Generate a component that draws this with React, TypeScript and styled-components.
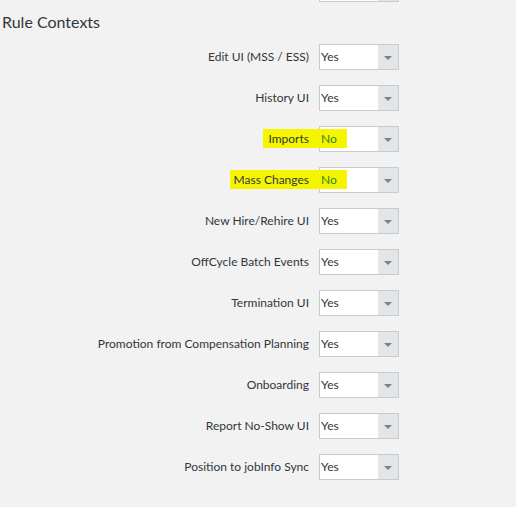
import React from "react";
import styled, { createGlobalStyle } from "styled-components";

const Global = createGlobalStyle`
  html, body { margin: 0; padding: 0; background: #f2f2f2; }
  body { font-family: Lato, "Open Sans", Arial, sans-serif; color: #32363a; }
`;

const Page = styled.div`
  width: 516px;
  height: 507px;
  background: #f2f2f2;
  overflow: hidden;
`;

const CutSelect = styled.div`
  margin-left: 319px;
  width: 78px;
  height: 1px;
  display: grid;
  grid-template-columns: 1fr 20px;
  border: 1px solid #c8cbcd;
  border-top: none;
  div:first-child { background: #fff; }
  div:last-child { background: #e3e6e8; }
`;

const Title = styled.h2`
  margin: 9px 0 0 2px;
  font-size: 16px;
  font-weight: 400;
  line-height: 22px;
  color: #32363a;
`;

const Form = styled.div`
  display: grid;
  grid-template-columns: 309px 80px;
  column-gap: 10px;
  row-gap: 15px;
  margin-top: 11px;
`;

const Label = styled.div`
  position: relative;
  font-size: 12px;
  line-height: 26px;
  height: 26px;
  text-align: right;
  white-space: nowrap;
  color: #32363a;
`;

const Highlight = styled.span<{ $w: number; $l: number }>`
  position: absolute;
  top: 3px;
  left: ${(p) => p.$l}px;
  width: ${(p) => p.$w}px;
  height: 19px;
  background: #f5f500;
  z-index: 0;
`;

const LabelText = styled.span`
  position: relative;
  z-index: 1;
`;

const Select = styled.div`
  position: relative;
  box-sizing: border-box;
  height: 26px;
  display: grid;
  grid-template-columns: 1fr 20px;
  border: 1px solid #c8cbcd;
  background: #fff;
`;

const Value = styled.span<{ $green?: boolean }>`
  position: relative;
  z-index: 1;
  font-size: 12px;
  line-height: 24px;
  padding-left: 1px;
  color: ${(p) => (p.$green ? "#2b8a1e" : "#32363a")};
`;

const ArrowBox = styled.div`
  background: #e3e6e8;
  display: flex;
  align-items: center;
  justify-content: center;
`;

const Arrow = styled.span`
  width: 0;
  height: 0;
  border-left: 4px solid transparent;
  border-right: 4px solid transparent;
  border-top: 4px solid #7c8285;
  margin-top: 1px;
`;

const SelectHighlight = styled.span<{ $w: number }>`
  position: absolute;
  left: -1px;
  top: 2px;
  width: ${(p) => p.$w}px;
  height: 19px;
  background: #f5f500;
  z-index: 0;
`;

type Row = { label: string; value: string; hl?: { l: number; w: number; sw: number } };

const rows: Row[] = [
  { label: "Edit UI (MSS / ESS)", value: "Yes" },
  { label: "History UI", value: "Yes" },
  { label: "Imports", value: "No", hl: { l: 263, w: 56, sw: 28 } },
  { label: "Mass Changes", value: "No", hl: { l: 230, w: 89, sw: 28 } },
  { label: "New Hire/Rehire UI", value: "Yes" },
  { label: "OffCycle Batch Events", value: "Yes" },
  { label: "Termination UI", value: "Yes" },
  { label: "Promotion from Compensation Planning", value: "Yes" },
  { label: "Onboarding", value: "Yes" },
  { label: "Report No-Show UI", value: "Yes" },
  { label: "Position to jobInfo Sync", value: "Yes" },
];

export default function App() {
  return (
    <Page>
      <Global />
      <CutSelect>
        <div />
        <div />
      </CutSelect>
      <Title>Rule Contexts</Title>
      <Form>
        {rows.map((r) => (
          <React.Fragment key={r.label}>
            <Label>
              {r.hl && <Highlight $l={r.hl.l} $w={r.hl.w} />}
              <LabelText>{r.label}</LabelText>
            </Label>
            <Select>
              {r.hl && <SelectHighlight $w={r.hl.sw} />}
              <Value $green={r.value === "No"}>{r.value}</Value>
              <ArrowBox>
                <Arrow />
              </ArrowBox>
            </Select>
          </React.Fragment>
        ))}
      </Form>
    </Page>
  );
}
